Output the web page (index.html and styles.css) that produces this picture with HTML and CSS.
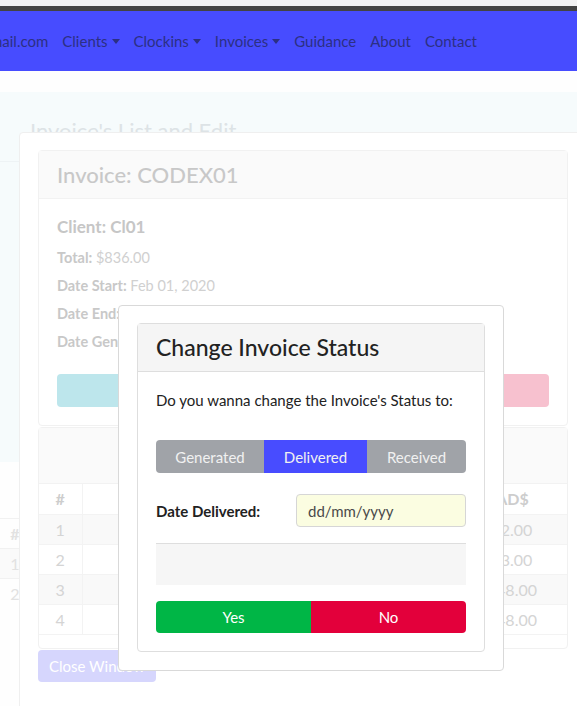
FILE: index.html
```html
<!DOCTYPE html>
<html lang="en">
<head>
<meta charset="utf-8">
<title>Invoices</title>
<link rel="stylesheet" href="styles.css">
</head>
<body>
<div class="chrome"></div>
<nav class="navbar">
  <ul class="nav">
    <li class="nav-item">codex@gmail.com</li>
    <li class="nav-item dropdown">Clients</li>
    <li class="nav-item dropdown">Clockins</li>
    <li class="nav-item dropdown">Invoices</li>
    <li class="nav-item">Guidance</li>
    <li class="nav-item">About</li>
    <li class="nav-item">Contact</li>
  </ul>
</nav>
<main class="page">
  <section class="jumbo">
    <h1 class="page-title">Invoice's List and Edit</h1>
    <hr class="rule">
  </section>
  <table class="bg-table">
    <tr><th>#</th><th></th></tr>
    <tr class="striped"><td>1</td><td></td></tr>
    <tr><td>2</td><td></td></tr>
  </table>
</main>

<div class="modal modal-back">
  <div class="card">
    <div class="card-header soft"><h3 class="inv-title">Invoice: CODEX01</h3></div>
    <div class="inv-body">
      <h5 class="client">Client: Cl01</h5>
      <p class="field"><b>Total:</b> $836.00</p>
      <p class="field"><b>Date Start:</b> Feb 01, 2020</p>
      <p class="field"><b>Date End:</b></p>
      <p class="field"><b>Date Generated:</b></p>
      <div class="actions">
        <button class="btn btn-info"></button>
        <button class="btn btn-danger"></button>
      </div>
    </div>
  </div>
  <div class="card items">
    <div class="card-header soft tall"></div>
    <table class="items-table">
      <tr><th class="num">#</th><th></th><th></th><th class="amt">CAD$</th></tr>
      <tr class="striped"><td class="num">1</td><td></td><td></td><td class="amt">$72.00</td></tr>
      <tr><td class="num">2</td><td></td><td></td><td class="amt">$63.00</td></tr>
      <tr class="striped"><td class="num">3</td><td></td><td></td><td class="amt">$348.00</td></tr>
      <tr><td class="num">4</td><td></td><td></td><td class="amt">$348.00</td></tr>
    </table>
  </div>
  <button class="btn btn-close">Close Window</button>
</div>

<div class="modal modal-front">
  <div class="card">
    <div class="card-header"><h4 class="modal-title">Change Invoice Status</h4></div>
    <div class="card-body">
      <p class="prompt">Do you wanna change the Invoice's Status to:</p>
      <div class="seg-group">
        <button class="seg seg-gray">Generated</button>
        <button class="seg seg-active">Delivered</button>
        <button class="seg seg-gray">Received</button>
      </div>
      <div class="date-row">
        <label class="date-label" for="dd">Date Delivered:</label>
        <input id="dd" class="date-input" type="text" placeholder="dd/mm/yyyy">
      </div>
      <div class="note-box"></div>
      <div class="confirm">
        <button class="cbtn btn-yes">Yes</button>
        <button class="cbtn btn-no">No</button>
      </div>
    </div>
  </div>
</div>
</body>
</html>
```

FILE: styles.css
```css
* { box-sizing: border-box; }
html, body { margin: 0; }
body {
  position: relative;
  width: 577px;
  height: 706px;
  overflow: hidden;
  background: #fefefe;
  font-family: Lato, "Noto Sans", sans-serif;
  color: #212529;
}
button { font-family: inherit; }

.chrome { height: 11px; background: #f1f1f2; border-bottom: 5px solid #434343; }

.navbar {
  height: 60px;
  background: #474cff;
  display: flex;
  justify-content: flex-end;
  align-items: center;
  padding-right: 93px;
  overflow: hidden;
}
.nav { display: flex; flex-shrink: 0; list-style: none; margin: 0; padding: 0; }
.nav-item { padding: 0 7px; font-size: 15px; color: #2c3083; white-space: nowrap; }
.dropdown::after {
  content: "";
  display: inline-block;
  margin-left: 4px;
  vertical-align: 3px;
  border-top: 5px solid #2c3083;
  border-left: 4px solid transparent;
  border-right: 4px solid transparent;
}

.page { padding-top: 21px; }
.jumbo { height: 370px; background: #f6fbfc; padding: 26px 30px 0; }
.page-title { margin: 0; font-size: 22px; font-weight: 400; color: #dde3e6; line-height: 26px; }
.rule { margin: 17px -30px 0; border: 0; border-top: 1px solid #eef3f5; }
.bg-table { margin-top: 56px; border-collapse: collapse; color: #e2e2e2; font-size: 16px; }
.bg-table th, .bg-table td { border-top: 1px solid #f1f1f1; height: 30px; padding: 0 10px; text-align: center; }
.bg-table th:first-child, .bg-table td:first-child { width: 30px; padding: 0; }
.bg-table .striped { background: #fafafa; }

.modal { position: absolute; background: #fff; border-radius: 4px; }
.modal-back {
  left: 19px; top: 132px; width: 568px; height: 600px;
  border: 1px solid #efefef;
  padding: 17px 18px;
}
.card { border: 1px solid #f1f1f1; border-radius: 4px; background: #fff; }
.card-header { background: #fafafa; border-bottom: 1px solid #f2f2f2; padding: 9px 18px; }
.inv-title { margin: 0; font-size: 22px; font-weight: 500; line-height: 29px; color: #c8c8c8; }
.inv-body { padding: 18px 18px 18px; }
.client { margin: 0 0 7px; font-size: 17px; line-height: 20px; color: #c6c6c6; font-weight: 700; }
.field { margin: 0; font-size: 14.5px; line-height: 28px; color: #d0d0d0; }
.field b { color: #c8c8c8; }
.actions { display: grid; grid-template-columns: 1fr 1fr; gap: 8px; margin-top: 18px; }
.btn { border: 0; border-radius: 4px; height: 33px; color: #fff; font-size: 15px; }
.btn-info { background: #bde6ec; }
.btn-danger { background: #f7c1cf; }
.items { margin-top: 1px; padding-bottom: 13px; }
.tall { height: 56px; }
.items-table { width: 100%; border-collapse: collapse; font-size: 16px; color: #d4d4d4; }
.items-table th, .items-table td { height: 30px; border-bottom: 1px solid #f3f3f3; border-left: 1px solid #f3f3f3; padding: 0; text-align: center; }
.items-table th { color: #cdcdcd; font-weight: 700; }
.items-table .num { width: 43px; border-left: 0; }
.items-table .amt { width: 120px; text-align: center; }
.items-table .striped { background: #f9f9f9; }
.btn-close { display: block; margin-top: 1px; height: 32px; padding: 0 11px; background: #d6d6fd; font-size: 15px; }

.modal-front {
  left: 118px; top: 305px; width: 386px; height: 366px;
  border: 1px solid #d9d9d9;
  padding: 17px 18px;
}
.modal-front .card { border-color: #dedede; }
.modal-front .card-header { background: #f5f5f5; border-bottom: 1px solid #dedede; padding: 9px 18px; height: 48px; }
.modal-title { margin: 0; font-size: 23px; font-weight: 500; line-height: 29px; color: #222; }
.card-body { padding: 17px 18px 18px; }
.prompt { margin: 0; font-size: 15px; line-height: 22px; color: #222; white-space: nowrap; }
.seg-group { display: grid; grid-template-columns: 108px 103px 99px; margin-top: 29px; height: 33px; border-radius: 4px; overflow: hidden; }
.seg { border: 0; font-size: 15px; color: #f1f1f1; }
.seg-gray { background: #a0a3a8; }
.seg-active { background: #484cff; }
.date-row { display: grid; grid-template-columns: 140px 1fr; align-items: center; margin-top: 21px; }
.date-label { font-size: 15px; font-weight: 700; color: #222; }
.date-input {
  height: 33px; border: 1px solid #d6d6d6; border-radius: 4px; background: #fbfde1;
  padding: 0 11px; font-family: inherit; font-size: 15px; color: #444; width: 100%;
}
.date-input::placeholder { color: #4a4a4a; opacity: 1; }
.note-box { margin-top: 16px; height: 42px; background: #f6f6f6; border-top: 1px solid #dedede; }
.confirm { display: grid; grid-template-columns: 1fr 1fr; margin-top: 16px; height: 32px; border-radius: 4px; overflow: hidden; }
.cbtn { border: 0; color: #fff; font-size: 15px; }
.btn-yes { background: #00b646; }
.btn-no { background: #e3003b; }
```
